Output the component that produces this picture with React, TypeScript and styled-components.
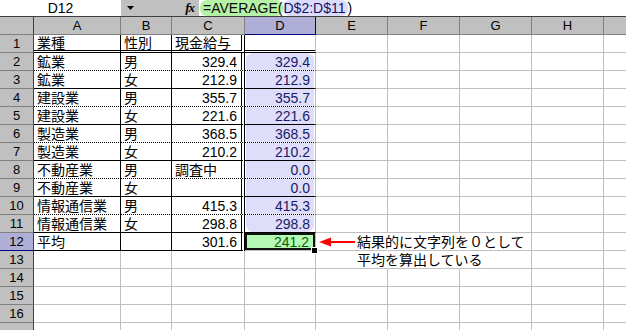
import styled, { createGlobalStyle } from "styled-components"

const GlobalStyle = createGlobalStyle`
  html, body {
    margin: 0;
    padding: 0;
    background: #fff;
    overflow: hidden;
  }
  body {
    font-family: "Liberation Sans", "Noto Sans CJK JP", sans-serif;
    color: #000;
  }
`

type Line = "grid" | "solid" | "dotted" | "double" | "none"

const lineCss = (l: Line, vertical = false) => {
  switch (l) {
    case "solid":
      return "1px solid #000"
    case "dotted":
      return "1px dotted #000"
    case "double":
      return vertical ? "4px double #000" : "3px double #000"
    case "none":
      return "1px solid transparent"
    default:
      return "1px solid #c0c0c0"
  }
}

const COLS = [34, 87, 51, 73, 71, 72, 72, 72, 72, 72]
// column I is only partly on screen, its letter falls outside the window
const LETTERS = ["A", "B", "C", "D", "E", "F", "G", "H", ""]

const TABLE: string[][] = [
  ["業種", "性別", "現金給与", ""],
  ["鉱業", "男", "329.4", "329.4"],
  ["鉱業", "女", "212.9", "212.9"],
  ["建設業", "男", "355.7", "355.7"],
  ["建設業", "女", "221.6", "221.6"],
  ["製造業", "男", "368.5", "368.5"],
  ["製造業", "女", "210.2", "210.2"],
  ["不動産業", "男", "調査中", "0.0"],
  ["不動産業", "女", "", "0.0"],
  ["情報通信業", "男", "415.3", "415.3"],
  ["情報通信業", "女", "298.8", "298.8"],
  ["平均", "", "301.6", "241.2"],
]

export default function App() {
  return (
    <Screen>
      <GlobalStyle />
      <FormulaBar>
        <NameBox>D12</NameBox>
        <BarTools>
          <svg width="7" height="4" viewBox="0 0 7 4">
            <polygon points="0,0 7,0 3.5,4" fill="#000" />
          </svg>
          <Fx>fx</Fx>
        </BarTools>
        <Formula>
          <FnPart>=AVERAGE(</FnPart>
          <RefPart>D$2:D$11</RefPart>
          <span>)</span>
        </Formula>
      </FormulaBar>

      <Sheet>
        <Corner />
        {LETTERS.map((l, i) => (
          <ColHead key={`c${i}`} $on={l === "D"}>
            {l}
          </ColHead>
        ))}

        {Array.from({ length: 17 }, (_, i) => {
          const row = i + 1
          return [
            <RowHead key={`h${row}`} $on={row === 12}>
              {row < 17 ? row : ""}
            </RowHead>,
            ...LETTERS.map((_l, j) => renderCell(row, j, `${j}-${row}`)),
          ]
        })}
      </Sheet>
    </Screen>
  )
}

function renderCell(row: number, col: number, key: string) {
  if (row <= 12 && col <= 3) {
    const text = TABLE[row - 1][col]
    const r: Line = col < 2 ? "solid" : col === 2 ? "double" : "grid"
    const b: Line =
      row === 1 ? "double" : row === 12 ? "solid" : row % 2 === 0 ? "dotted" : "solid"
    const numeric = /^[0-9.]+$/.test(text)

    if (col === 3 && row >= 2 && row <= 11) {
      const pos = row === 2 ? "top" : row === 11 ? "bottom" : "mid"
      return (
        <Cell key={key} $r={r} $b={b} $pad="0 1px 0 1px">
          <RangeFill $pos={pos}>{text}</RangeFill>
        </Cell>
      )
    }
    if (col === 3 && row === 12) {
      return (
        <Cell key={key} $r="grid" $b="grid" $pad="0">
          <ActiveFill>{text}</ActiveFill>
          <Handle />
        </Cell>
      )
    }
    return (
      <Cell key={key} $r={r} $b={b} $align={numeric ? "right" : "left"}>
        {text}
      </Cell>
    )
  }

  // overflowing note text in E12 / E13 hides the E|F and F|G gridlines
  const hideRight = (row === 12 || row === 13) && (col === 4 || col === 5)
  if (row === 12 && col === 4) {
    return (
      <Cell key={key} $r="none" $b="grid" $pad="0 0 0 3px">
        <Note>
          <svg width="36" height="10" viewBox="0 0 36 10">
            <polygon points="0,5 12,0.5 12,9.5" fill="#ff0000" />
            <rect x="10" y="4" width="26" height="2" fill="#ff0000" />
          </svg>
          <span>結果的に文字列を０として</span>
        </Note>
      </Cell>
    )
  }
  if (row === 13 && col === 4) {
    return (
      <Cell key={key} $r="none" $b="grid" $pad="0 0 0 41px">
        <Note>平均を算出している</Note>
      </Cell>
    )
  }
  return <Cell key={key} $r={hideRight ? "none" : "grid"} $b="grid" />
}

const Screen = styled.div`
  width: 626px;
  height: 330px;
  overflow: hidden;
  background: #fff;
`

const FormulaBar = styled.div`
  display: flex;
  height: 16px;
  border-bottom: 1px solid #404040;
  font-size: 13px;
  line-height: 16px;
`

const NameBox = styled.div`
  width: 121px;
  text-align: center;
  background: #fff;
  font-size: 14px;
`

const BarTools = styled.div`
  width: 78px;
  box-sizing: border-box;
  background: #c0c0c0;
  display: flex;
  align-items: center;
  justify-content: space-between;
  padding: 0 5px 0 6px;
`

const Fx = styled.span`
  font-family: "Liberation Serif", serif;
  font-style: italic;
  font-weight: bold;
  font-size: 13px;
  letter-spacing: -1px;
`

const Formula = styled.div`
  flex: 1;
  display: flex;
  align-items: center;
  padding-left: 1px;
  white-space: nowrap;
  font-size: 14px;
`

const FnPart = styled.span`
  background: #b6f2a6;
  border-radius: 7px;
  padding: 0 0 0 3px;
  color: #0a0a0a;
`

const RefPart = styled.span`
  background: #dcdcfa;
  border-radius: 7px;
  padding: 0 2px 0 1px;
  color: #10106a;
`

const Sheet = styled.div`
  display: grid;
  grid-template-columns: ${COLS.map((c) => `${c}px`).join(" ")};
  grid-auto-rows: 18px;
`

const Corner = styled.div`
  background: #c0c0c0;
  border-right: 1px solid #404040;
  border-bottom: 1px solid #808080;
  box-sizing: border-box;
`

const ColHead = styled.div<{ $on?: boolean }>`
  box-sizing: border-box;
  display: flex;
  align-items: center;
  justify-content: center;
  font-size: 13px;
  background: ${(p) => (p.$on ? "#aeaed6" : "#c0c0c0")};
  border-right: 1px solid ${(p) => (p.$on ? "#000080" : "#808080")};
  border-bottom: 1px solid ${(p) => (p.$on ? "#000080" : "#808080")};
`

const RowHead = styled.div<{ $on?: boolean }>`
  box-sizing: border-box;
  display: flex;
  align-items: center;
  justify-content: center;
  font-size: 13px;
  background: ${(p) => (p.$on ? "#aeaed6" : "#c0c0c0")};
  border-right: 1px solid #404040;
  border-bottom: 1px solid ${(p) => (p.$on ? "#000080" : "#808080")};
`

const Cell = styled.div<{ $r?: Line; $b?: Line; $align?: "left" | "right"; $pad?: string }>`
  position: relative;
  box-sizing: border-box;
  min-width: 0;
  display: flex;
  align-items: center;
  justify-content: ${(p) => (p.$align === "right" ? "flex-end" : "flex-start")};
  padding: ${(p) => p.$pad ?? "0 4px 0 3px"};
  border-right: ${(p) => lineCss(p.$r ?? "grid", true)};
  border-bottom: ${(p) => lineCss(p.$b ?? "grid")};
  font-size: 14px;
  line-height: 1;
  white-space: nowrap;
`

const RangeFill = styled.div<{ $pos: "top" | "mid" | "bottom" }>`
  flex: 1;
  align-self: stretch;
  display: flex;
  align-items: center;
  justify-content: flex-end;
  padding-right: 4px;
  background: #dedefa;
  color: #1a1a66;
  border-radius: ${(p) =>
    p.$pos === "top" ? "7px 7px 0 0" : p.$pos === "bottom" ? "0 0 7px 7px" : "0"};
`

const ActiveFill = styled.div`
  flex: 1;
  align-self: stretch;
  box-sizing: border-box;
  display: flex;
  align-items: center;
  justify-content: flex-end;
  padding-right: 4px;
  background: #b4fab4;
  color: #0c5a0c;
  border: 2px solid #101010;
`

const Handle = styled.div`
  position: absolute;
  right: -3px;
  bottom: -4px;
  width: 5px;
  height: 5px;
  background: #000;
  border: 1px solid #fff;
  z-index: 2;
`

const Note = styled.div`
  display: flex;
  align-items: center;
  gap: 2px;
  font-size: 14px;
  position: relative;
  z-index: 1;
`
